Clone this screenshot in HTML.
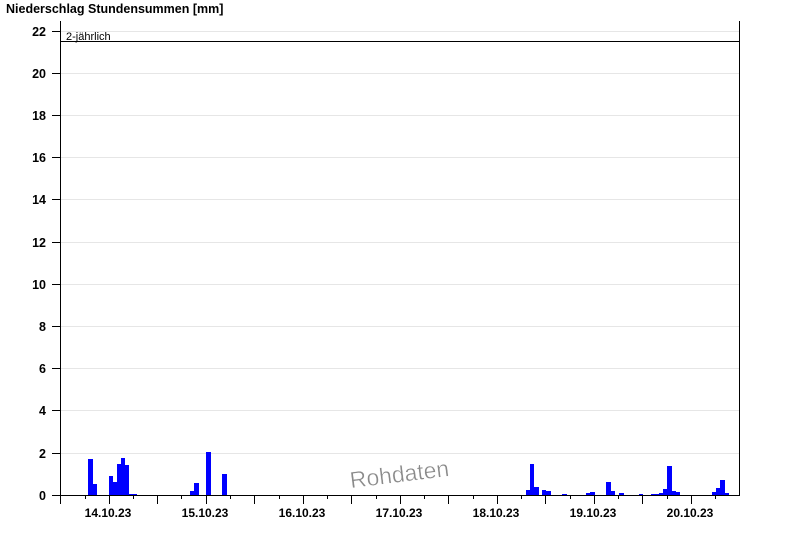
<!DOCTYPE html>
<html><head><meta charset="utf-8"><style>
html,body{margin:0;padding:0;background:#fff;}
svg{display:block;font-family:"Liberation Sans",Arial,sans-serif;}
</style></head><body>
<svg width="800" height="550" xmlns="http://www.w3.org/2000/svg">
<rect width="800" height="550" fill="#fff"/>
<text x="6" y="13" font-size="12.5" font-weight="bold" fill="#000">Niederschlag Stundensummen [mm]</text>
<g stroke="#e6e6e6" stroke-width="1">
<line x1="61" x2="740" y1="73.5" y2="73.5"/><line x1="61" x2="740" y1="115.5" y2="115.5"/>
<line x1="61" x2="740" y1="157.5" y2="157.5"/><line x1="61" x2="740" y1="199.5" y2="199.5"/>
<line x1="61" x2="740" y1="242.5" y2="242.5"/><line x1="61" x2="740" y1="284.5" y2="284.5"/>
<line x1="61" x2="740" y1="326.5" y2="326.5"/><line x1="61" x2="740" y1="368.5" y2="368.5"/>
<line x1="61" x2="740" y1="410.5" y2="410.5"/><line x1="61" x2="740" y1="453.5" y2="453.5"/>
<line x1="61" x2="740" y1="31.5" y2="31.5"/>
</g>
<text x="349" y="482" font-size="23" fill="#8a8a8a" stroke="#fff" stroke-width="0.4" transform="rotate(-7 400 470)">Rohdaten</text>
<g fill="#0000ff">
<rect x="88" y="459" width="5" height="36"/><rect x="93" y="484" width="4" height="11"/>
<rect x="109" y="476" width="4" height="19"/><rect x="113" y="482" width="4" height="13"/>
<rect x="117" y="464" width="4" height="31"/><rect x="121" y="458" width="4" height="37"/>
<rect x="125" y="465" width="4" height="30"/><rect x="129" y="494" width="8" height="1"/>
<rect x="190" y="491" width="4" height="4"/><rect x="194" y="483" width="5" height="12"/>
<rect x="206" y="452" width="5" height="43"/><rect x="222" y="474" width="5" height="21"/>
<rect x="526" y="490" width="4" height="5"/><rect x="530" y="464" width="4" height="31"/>
<rect x="534" y="487" width="5" height="8"/><rect x="542" y="490" width="4" height="5"/>
<rect x="546" y="491" width="5" height="4"/><rect x="562" y="494" width="5" height="1"/>
<rect x="586" y="493" width="4" height="2"/><rect x="590" y="492" width="5" height="3"/>
<rect x="606" y="482" width="5" height="13"/><rect x="611" y="491" width="4" height="4"/>
<rect x="619" y="493" width="5" height="2"/><rect x="639" y="494" width="4" height="1"/>
<rect x="651" y="494" width="8" height="1"/><rect x="659" y="493" width="4" height="2"/>
<rect x="663" y="489" width="4" height="6"/><rect x="667" y="466" width="5" height="29"/>
<rect x="672" y="491" width="4" height="4"/><rect x="676" y="492" width="4" height="3"/>
<rect x="712" y="492" width="4" height="3"/><rect x="716" y="488" width="4" height="7"/>
<rect x="720" y="480" width="5" height="15"/><rect x="725" y="493" width="4" height="2"/>
</g>
<g stroke="#000" stroke-width="1">
<line x1="60.5" y1="21" x2="60.5" y2="504"/>
<line x1="739.5" y1="21" x2="739.5" y2="495"/>
<line x1="60" y1="495.5" x2="740" y2="495.5"/>
<line x1="60" y1="41.5" x2="740" y2="41.5"/>
<line x1="52" x2="60" y1="31.5" y2="31.5"/><line x1="52" x2="60" y1="73.5" y2="73.5"/>
<line x1="52" x2="60" y1="115.5" y2="115.5"/><line x1="52" x2="60" y1="157.5" y2="157.5"/>
<line x1="52" x2="60" y1="199.5" y2="199.5"/><line x1="52" x2="60" y1="242.5" y2="242.5"/>
<line x1="52" x2="60" y1="284.5" y2="284.5"/><line x1="52" x2="60" y1="326.5" y2="326.5"/>
<line x1="52" x2="60" y1="368.5" y2="368.5"/><line x1="52" x2="60" y1="410.5" y2="410.5"/>
<line x1="52" x2="60" y1="453.5" y2="453.5"/><line x1="52" x2="60" y1="495.5" y2="495.5"/>
<line x1="109.5" x2="109.5" y1="495" y2="504"/><line x1="157.5" x2="157.5" y1="495" y2="504"/>
<line x1="206.5" x2="206.5" y1="495" y2="504"/><line x1="254.5" x2="254.5" y1="495" y2="504"/>
<line x1="303.5" x2="303.5" y1="495" y2="504"/><line x1="351.5" x2="351.5" y1="495" y2="504"/>
<line x1="400.5" x2="400.5" y1="495" y2="504"/><line x1="448.5" x2="448.5" y1="495" y2="504"/>
<line x1="497.5" x2="497.5" y1="495" y2="504"/><line x1="545.5" x2="545.5" y1="495" y2="504"/>
<line x1="594.5" x2="594.5" y1="495" y2="504"/><line x1="642.5" x2="642.5" y1="495" y2="504"/>
<line x1="691.5" x2="691.5" y1="495" y2="504"/>
<line x1="85.5" x2="85.5" y1="495" y2="499"/><line x1="133.5" x2="133.5" y1="495" y2="499"/>
<line x1="181.5" x2="181.5" y1="495" y2="499"/><line x1="230.5" x2="230.5" y1="495" y2="499"/>
<line x1="279.5" x2="279.5" y1="495" y2="499"/><line x1="327.5" x2="327.5" y1="495" y2="499"/>
<line x1="376.5" x2="376.5" y1="495" y2="499"/><line x1="424.5" x2="424.5" y1="495" y2="499"/>
<line x1="473.5" x2="473.5" y1="495" y2="499"/><line x1="521.5" x2="521.5" y1="495" y2="499"/>
<line x1="570.5" x2="570.5" y1="495" y2="499"/><line x1="618.5" x2="618.5" y1="495" y2="499"/>
<line x1="667.5" x2="667.5" y1="495" y2="499"/><line x1="715.5" x2="715.5" y1="495" y2="499"/>
</g>
<text x="66" y="40" font-size="11" fill="#000">2-jährlich</text>
<g font-size="12.5" font-weight="bold" text-anchor="end" fill="#000">
<text x="46" y="36">22</text><text x="46" y="78">20</text><text x="46" y="120">18</text>
<text x="46" y="162">16</text><text x="46" y="204">14</text><text x="46" y="247">12</text>
<text x="46" y="289">10</text><text x="46" y="331">8</text><text x="46" y="373">6</text>
<text x="46" y="415">4</text><text x="46" y="458">2</text><text x="46" y="500">0</text>
</g>
<g font-size="12" font-weight="bold" text-anchor="middle" fill="#000">
<text x="108" y="517">14.10.23</text><text x="205" y="517">15.10.23</text>
<text x="302" y="517">16.10.23</text><text x="399" y="517">17.10.23</text>
<text x="496" y="517">18.10.23</text><text x="593" y="517">19.10.23</text>
<text x="690" y="517">20.10.23</text>
</g>
</svg>
</body></html>
